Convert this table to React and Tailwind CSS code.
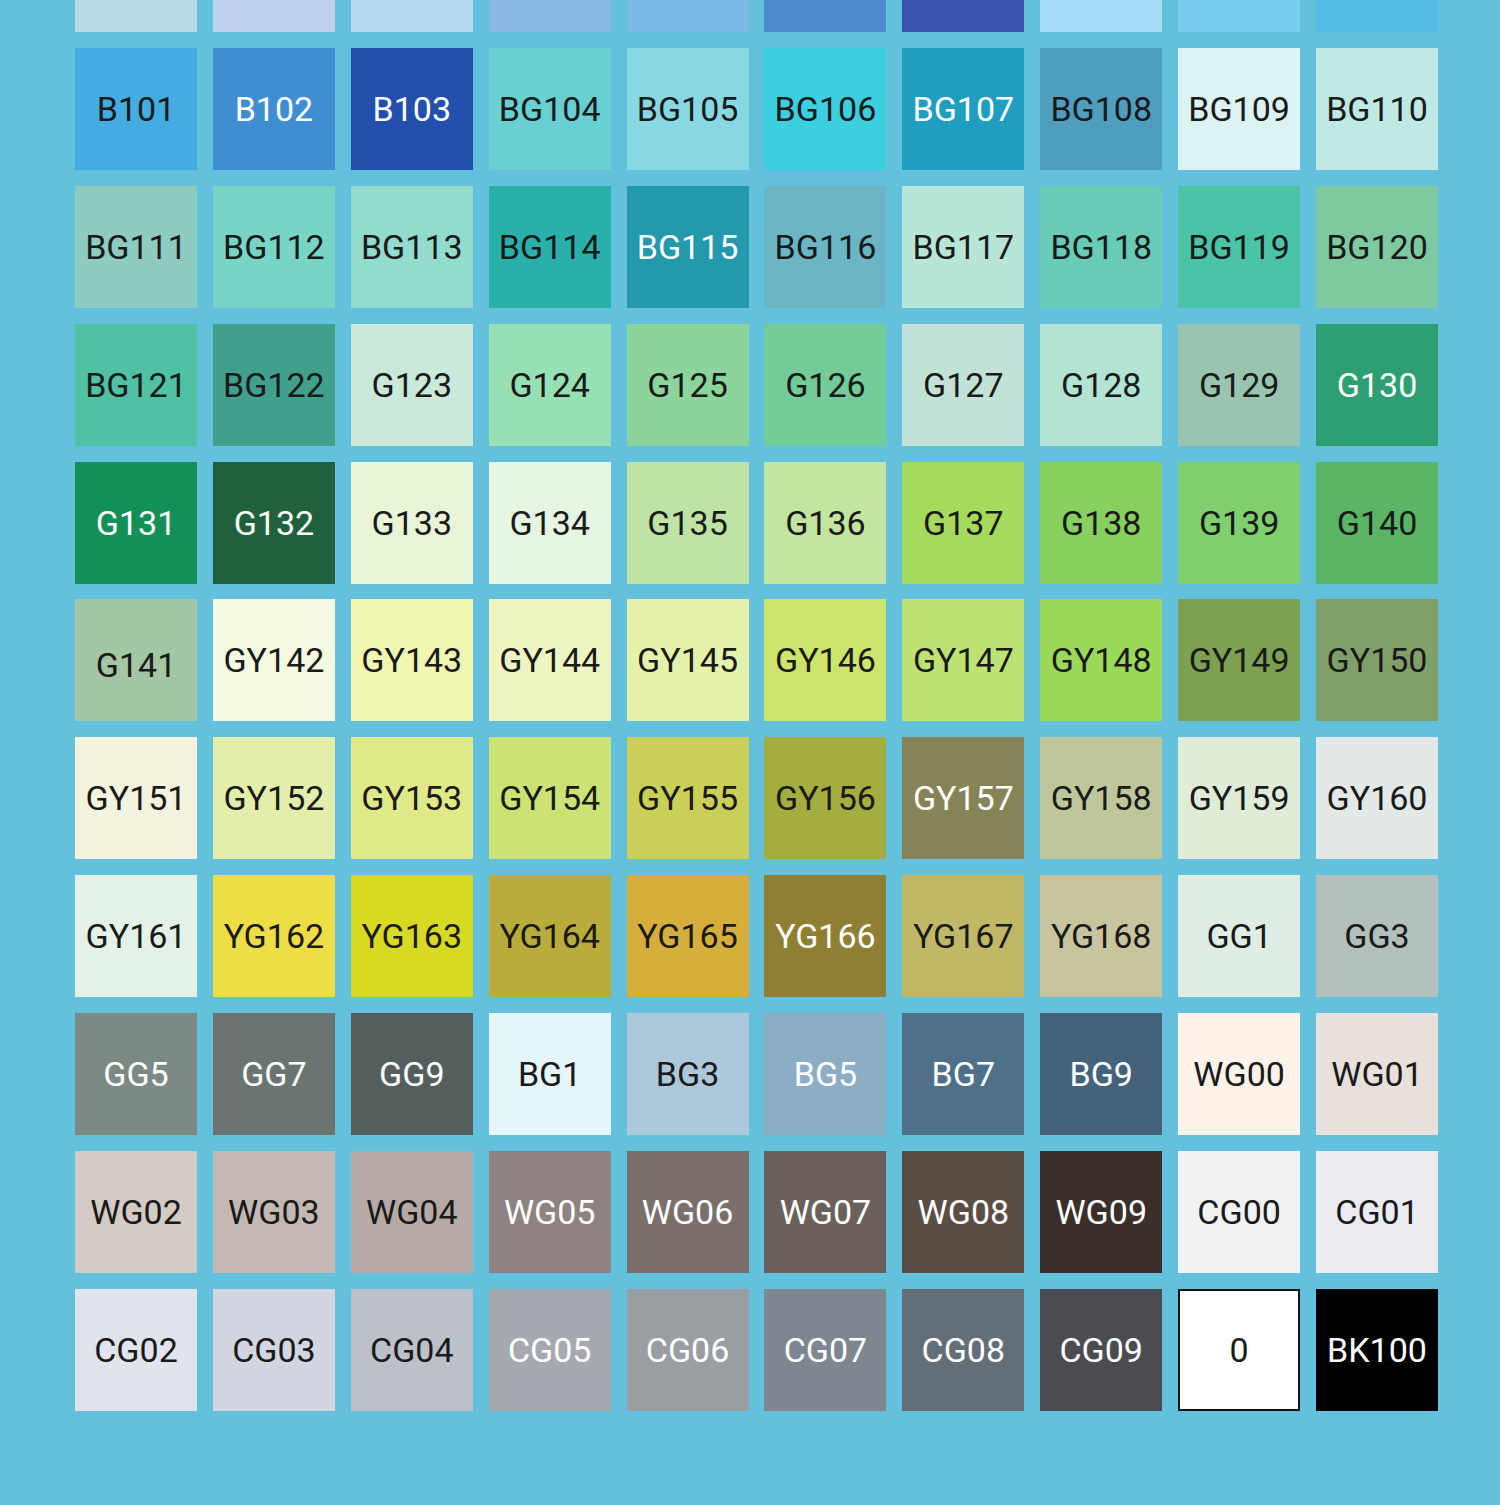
// marker chart: [label, background, light text?, nudge]
const swatches = [
  ['', '#b7d9e6'], ['', '#bdd0ec'], ['', '#b3d9f2'], ['', '#8bb7e5'], ['', '#7ab9e6'],
  ['', '#4e8bcd'], ['', '#3753ad'], ['', '#a6dcf5'], ['', '#7bcdf0'], ['', '#53bde6'],

  ['B101', '#44ace0'], ['B102', '#3f8ed4', true], ['B103', '#2350ad', true], ['BG104', '#68cfd2'], ['BG105', '#87d8e2'],
  ['BG106', '#3bcfe0'], ['BG107', '#1f9ec0', true], ['BG108', '#4f9dbf'], ['BG109', '#dcf3f3'], ['BG110', '#c0e9e5'],

  ['BG111', '#8ecbc1'], ['BG112', '#78d4c4'], ['BG113', '#92dbcd'], ['BG114', '#29b0aa'], ['BG115', '#2299ad', true],
  ['BG116', '#6ab6c4'], ['BG117', '#b8e6d6'], ['BG118', '#67cbb6'], ['BG119', '#4bc3a7'], ['BG120', '#7ec9a0'],

  ['BG121', '#4ec2a2'], ['BG122', '#41a08c'], ['G123', '#cae9d8'], ['G124', '#97e0b4'], ['G125', '#8bd49c'],
  ['G126', '#73cb98'], ['G127', '#c2e2d6'], ['G128', '#b3e3d2'], ['G129', '#98c4b0'], ['G130', '#2d9f72', true],

  ['G131', '#138f59', true], ['G132', '#1e613c', true], ['G133', '#e8f6d7'], ['G134', '#e5f5e2'], ['G135', '#bde4a5'],
  ['G136', '#c2e59f'], ['G137', '#a5da5c'], ['G138', '#87d060'], ['G139', '#7fcf6f'], ['G140', '#5ab566'],

  ['G141', '#a4c7a3', false, 'low'], ['GY142', '#f5fbe1'], ['GY143', '#f1f6b3'], ['GY144', '#eff5c1'], ['GY145', '#e5f2a9'],
  ['GY146', '#cde56b'], ['GY147', '#bee374'], ['GY148', '#9bd95b'], ['GY149', '#7da152'], ['GY150', '#80a06a'],

  ['GY151', '#f4f3dd'], ['GY152', '#e2eea9'], ['GY153', '#dfe987'], ['GY154', '#cbe374'], ['GY155', '#c9cf57'],
  ['GY156', '#a4ad3f'], ['GY157', '#858456', true], ['GY158', '#bdc79a'], ['GY159', '#e0ecd8'], ['GY160', '#e2e9e6'],

  ['GY161', '#e3f1e8'], ['YG162', '#eedd45'], ['YG163', '#d8d922'], ['YG164', '#b9ac3b'], ['YG165', '#d5ae3b'],
  ['YG166', '#8e7f33', true], ['YG167', '#c0b867'], ['YG168', '#c7c49e'], ['GG1', '#e0ede4'], ['GG3', '#b2bfbd'],

  ['GG5', '#7d8983', true], ['GG7', '#6a7470', true], ['GG9', '#545f5d', true], ['BG1', '#e6f5fa'], ['BG3', '#adc8da'],
  ['BG5', '#8caec5', true], ['BG7', '#4e7089', true], ['BG9', '#44637a', true], ['WG00', '#fdf3ea'], ['WG01', '#e8e0da'],

  ['WG02', '#d5cbc5'], ['WG03', '#c3b8b2'], ['WG04', '#b7aaa6'], ['WG05', '#8e8380', true], ['WG06', '#7a6f6b', true],
  ['WG07', '#6b605a', true], ['WG08', '#5a4d46', true], ['WG09', '#3a2f2b', true], ['CG00', '#f1f2f4'], ['CG01', '#ebebf1'],

  ['CG02', '#e1e4ec'], ['CG03', '#d1d6e0'], ['CG04', '#bcc1c9'], ['CG05', '#a6aab0', true], ['CG06', '#9a9da2', true],
  ['CG07', '#7e868f', true], ['CG08', '#636e77', true], ['CG09', '#4a4c51', true], ['0', '#ffffff', false, 'box'], ['BK100', '#000000', true],
]

function Swatch({ label, color, light, nudge }) {
  return (
    <div
      className={`flex items-center justify-center ${nudge === 'box' ? 'border-2 border-[#111]' : ''} ${nudge === 'low' ? 'pt-[10px]' : ''}`}
      style={{ backgroundColor: color }}
    >
      <span className={`text-[34px] leading-none ${light ? 'text-white' : 'text-[#1a1a1a]'}`}>
        {label}
      </span>
    </div>
  )
}

export default function App() {
  return (
    <main
      className="h-[1505px] w-[1500px] overflow-hidden bg-[#64c1dd] pl-[75px]"
      style={{ fontFamily: 'Roboto, "Liberation Sans", sans-serif' }}
    >
      <section className="-mt-[90px] grid grid-cols-[repeat(10,122px)] auto-rows-[122px] gap-x-[15.9px] gap-y-[15.9px]">
        {swatches.map(([label, color, light, nudge], i) => (
          <Swatch key={i} label={label} color={color} light={light} nudge={nudge} />
        ))}
      </section>
    </main>
  )
}
